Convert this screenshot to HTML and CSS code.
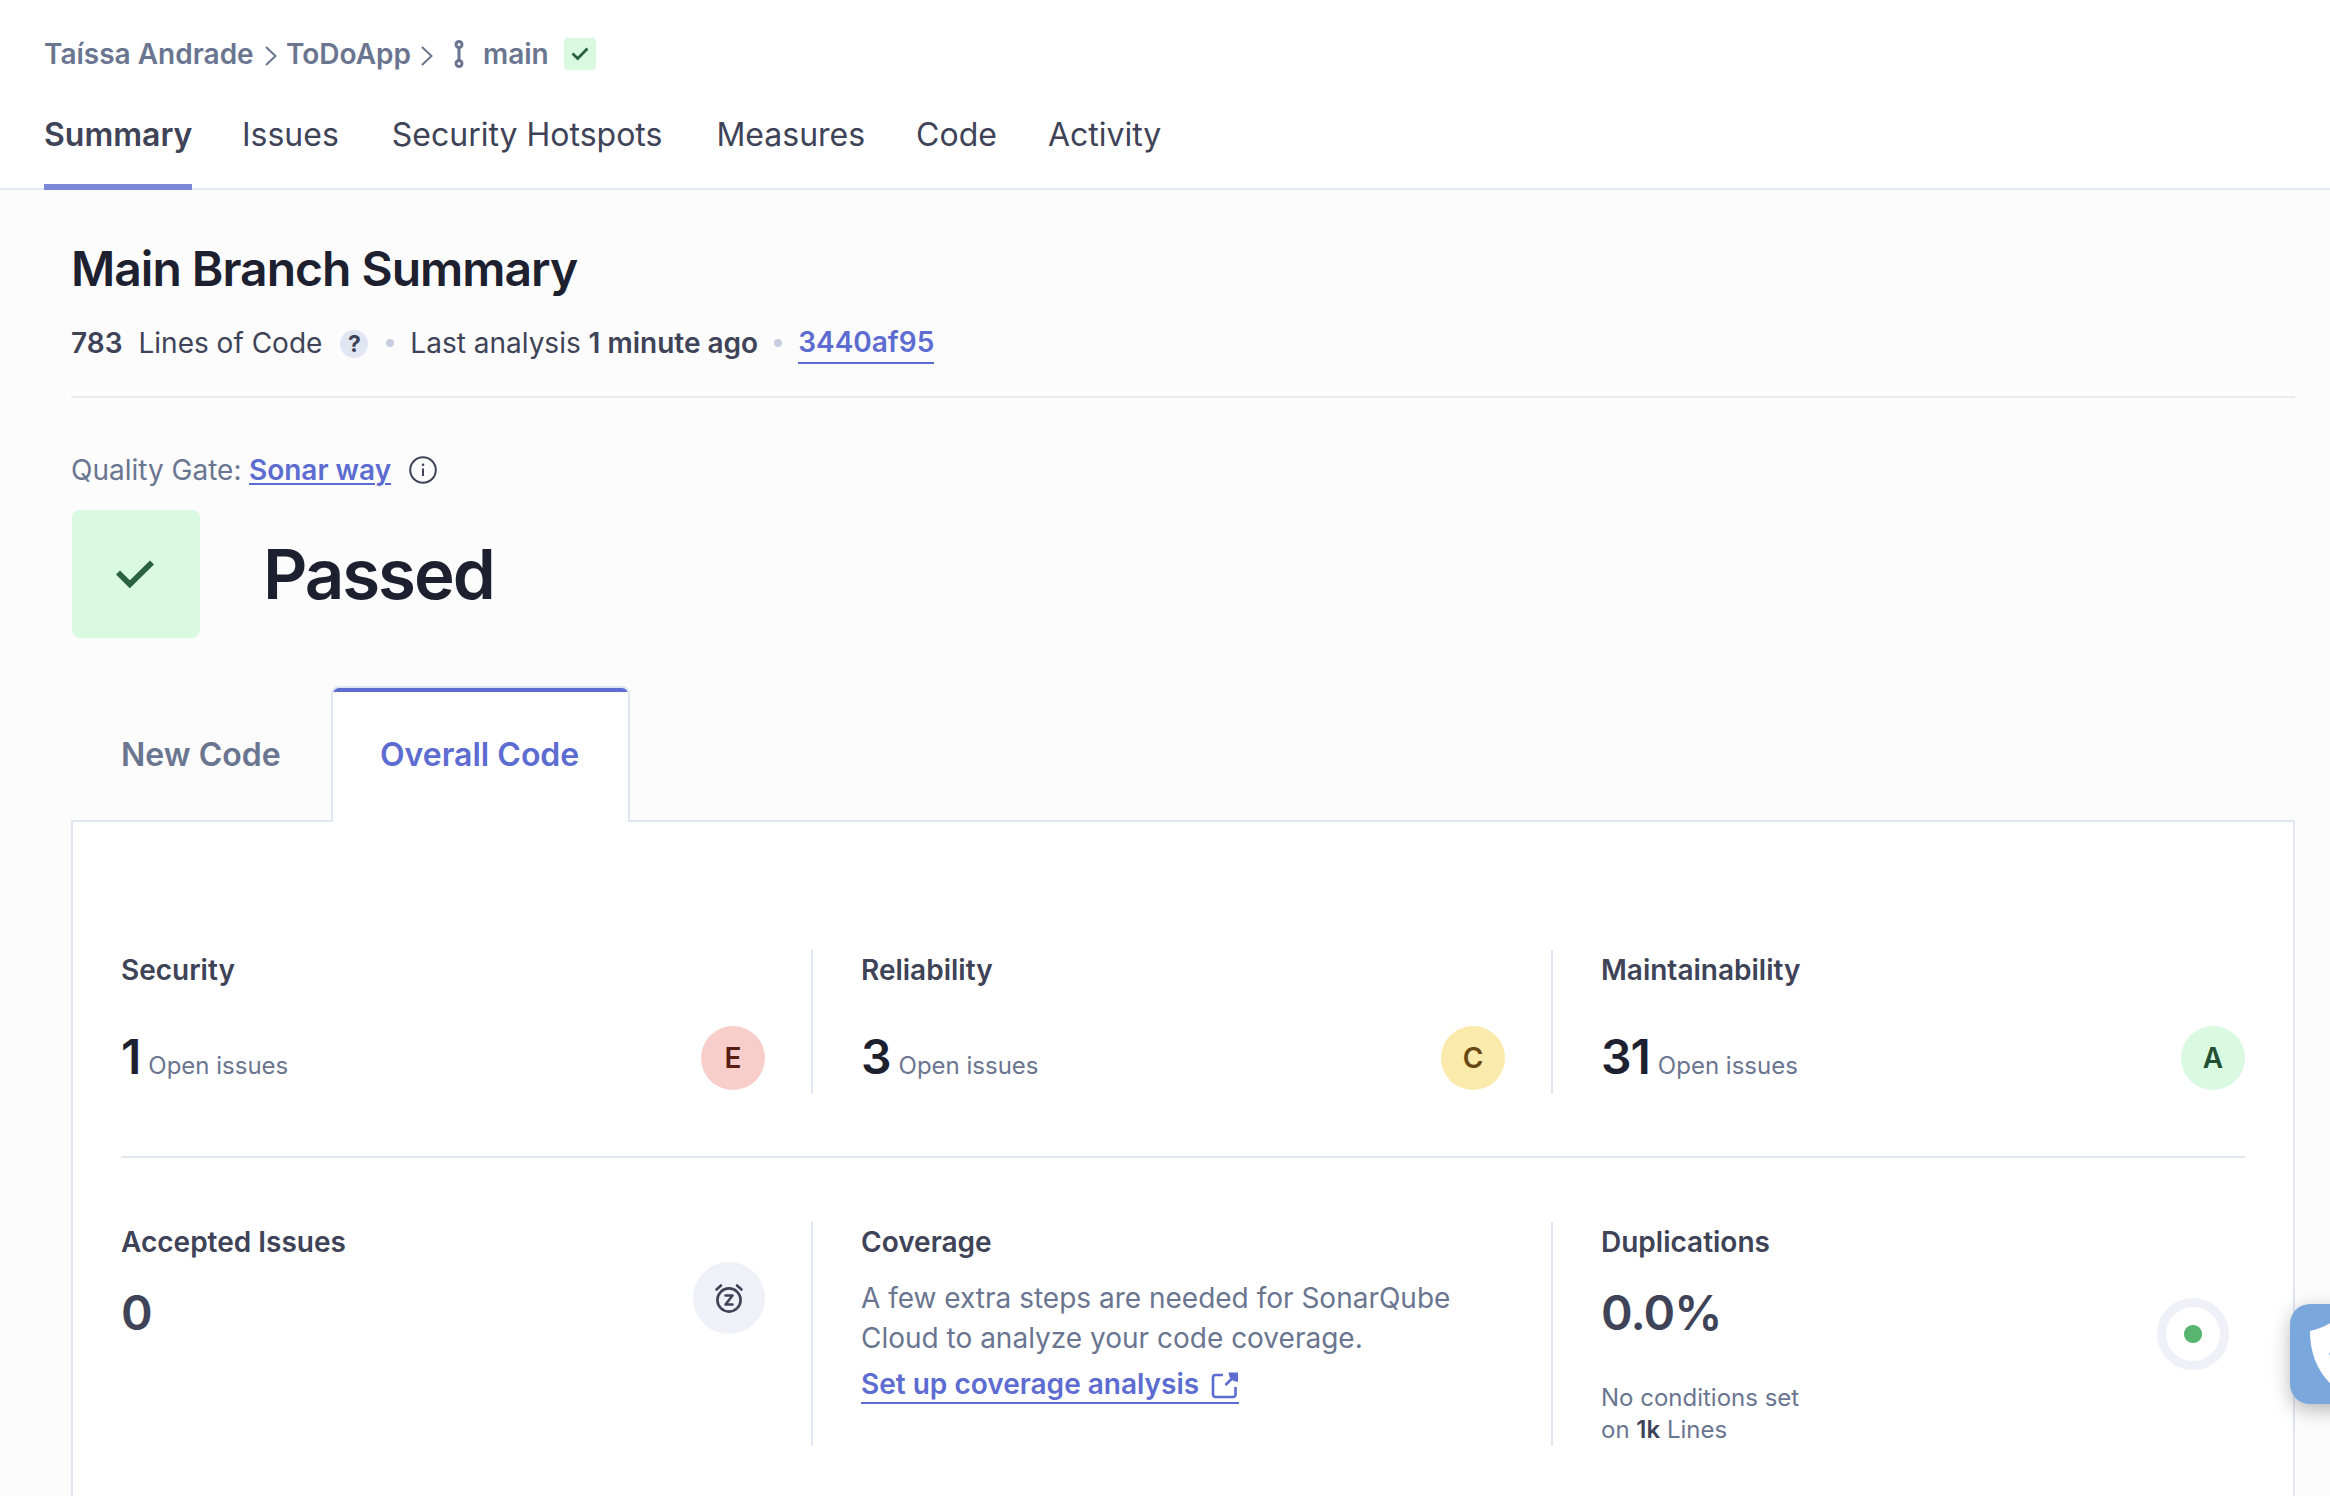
FILE: index.html
```html
<!DOCTYPE html>
<html lang="en">
<head>
<meta charset="utf-8">
<title>ToDoApp - Main Branch Summary</title>
<link rel="stylesheet" href="styles.css">
</head>
<body>
<header class="header">
  <nav class="crumbs">
    <a class="crumb-owner">Taíssa Andrade</a>
    <svg class="chevron" width="12" height="20" viewBox="0 0 12 20"><path d="M1 1l9.500 9-9.500 9"/></svg>
    <a class="crumb-project">ToDoApp</a>
    <svg class="chevron" width="12" height="20" viewBox="0 0 12 20"><path d="M1 1l9.500 9-9.500 9"/></svg>
    <svg class="branch" width="10" height="28" viewBox="0 0 10 28"><circle cx="5" cy="4.500" r="3"/><circle cx="5" cy="23.500" r="3"/><path d="M5 7.500v13"/></svg>
    <span class="crumb-branch">main</span>
    <span class="status-small"><svg width="18" height="14" viewBox="0 0 18 14"><path d="M1.500 6.500l5.200 5L16.500 1.500"/></svg></span>
  </nav>
  <nav class="nav">
    <a class="nav-item active">Summary</a>
    <a class="nav-item issues-link">Issues</a>
    <a class="nav-item hotspots-link">Security Hotspots</a>
    <a class="nav-item measures-link">Measures</a>
    <a class="nav-item">Code</a>
    <a class="nav-item">Activity</a>
  </nav>
</header>
<main class="content">
  <h1 class="title">Main Branch Summary</h1>
  <div class="meta">
    <b class="loc-count">783</b>
    <span class="loc-label">Lines of Code</span>
    <span class="help">?</span>
    <span class="dot"></span>
    <span class="analysis">Last analysis <b>1 minute ago</b></span>
    <span class="dot dot-last"></span>
    <a class="commit">3440af95</a>
  </div>
  <div class="gate">
    <span>Quality Gate:</span>
    <a class="gate-link">Sonar way</a>
    <svg class="info" width="28" height="28" viewBox="0 0 28 28"><circle cx="14" cy="14" r="12.800"/><path d="M14 12.500v7.500" /><circle class="info-dot" cx="14" cy="8.700" r="1.300"/></svg>
  </div>
  <div class="result">
    <div class="result-box"><svg width="40" height="30" viewBox="0 0 40 30"><path d="M2 13.500L13.800 25.300 36 3.500"/></svg></div>
    <div class="result-text">Passed</div>
  </div>
  <div class="tabs">
    <div class="tab">New Code</div>
    <div class="tab selected">Overall Code</div>
  </div>
  <section class="panel">
    <div class="row row-first">
      <div class="cell">
        <h2>Security</h2>
        <div class="issues"><b>1</b><span>Open issues</span><i class="rating e">E</i></div>
      </div>
      <div class="cell">
        <h2>Reliability</h2>
        <div class="issues"><b>3</b><span>Open issues</span><i class="rating c">C</i></div>
      </div>
      <div class="cell">
        <h2>Maintainability</h2>
        <div class="issues"><b>31</b><span>Open issues</span><i class="rating a">A</i></div>
      </div>
    </div>
    <div class="row row-second">
      <div class="cell accepted">
        <div><h2>Accepted Issues</h2><div class="value">0</div></div>
        <span class="snooze"><svg width="30" height="30" viewBox="0 0 30 30"><circle cx="15" cy="17" r="11.600"/><path d="M2.500 6.500L7 2.500M27.500 6.500L23 2.500M11.500 12.500h7l-7 9h7"/></svg></span>
      </div>
      <div class="cell">
        <h2>Coverage</h2>
        <p class="hint">A few extra steps are needed for SonarQube Cloud to analyze your code coverage.</p>
        <a class="setup">Set up coverage analysis<svg width="28" height="28" viewBox="0 0 28 28"><path class="frame" d="M12 4H4.500A2.500 2.500 0 0 0 2 6.500V23.500A2.500 2.500 0 0 0 4.500 26H22A2.500 2.500 0 0 0 24.500 23.500V16M14.500 14L23 5.500"/><path class="head" d="M17.500 1.500H27V11L22.500 10 18.500 6z"/></svg></a>
      </div>
      <div class="cell dup">
        <div><h2>Duplications</h2><div class="value">0.0%</div>
        <p class="cond">No conditions set<br>on <b>1k</b> Lines</p></div>
        <span class="ring"></span>
      </div>
    </div>
  </section>
</main>
<aside class="guard"><svg width="60" height="72" viewBox="0 0 60 72"><path d="M0 9Q18 5 30 -6Q42 5 60 9Q60 48 30 70Q0 48 0 9z"/><circle cx="21" cy="32" r="1.700"/></svg></aside>
</body>
</html>
```
FILE: styles.css
```css
* { box-sizing: border-box; margin: 0; padding: 0; }
html, body { height: 1496px; overflow: hidden; }
body { position: relative; background: #fcfcfd; color: #3e4357; font: 400 28px/40px Inter, "Liberation Sans", sans-serif; }
svg { display: block; flex: none; fill: none; }
b, h1, h2 { font-weight: 600; }
.header { height: 190px; padding: 34px 44px 0; background: #fff; border-bottom: 2px solid #e1e6f3; }
.crumbs { display: flex; align-items: center; height: 40px; color: #6a7590; font-weight: 600; white-space: nowrap; }
.crumb-owner { width: 221px; }
.crumb-project { width: 125px; margin: 0 10px 0 9px; }
.crumb-branch { width: 65px; margin-left: 19px; }
.chevron { stroke: #6a7590; stroke-width: 2; margin-top: 3px; }
.branch { stroke: #6a7590; stroke-width: 3; margin-left: 21px; }
.status-small { display: flex; align-items: center; justify-content: center; width: 32px; height: 32px; margin-left: 16px; border-radius: 4px; background: #d9f9e1; }
.status-small svg { stroke: #2a6140; stroke-width: 2.8; }
.nav { display: flex; margin-top: 38px; height: 78px; font-size: 32px; line-height: 46px; gap: 51px; white-space: nowrap; }
.nav-item { height: 78px; }
.nav-item.active { font-weight: 600; border-bottom: 6px solid #7b87d9; }
.issues-link { margin-left: -1.5px; }
.hotspots-link { margin-left: 2px; }
.measures-link { margin-left: 3px; }
.content { padding: 45px 35px 0 71px; }
.title { font-size: 48px; line-height: 68px; letter-spacing: -1px; color: #1d212f; }
.meta { display: flex; align-items: center; height: 95px; padding-bottom: 14px; border-bottom: 2px solid #ebebeb; white-space: nowrap; }
.loc-label { margin-left: 16px; }
.help { width: 28px; height: 28px; margin: 3px 0 0 18px; border-radius: 50%; background: #e1e6f3; font-size: 23px; font-weight: 700; line-height: 28px; text-align: center; }
.dot { width: 8px; height: 8px; margin: 0 16px 0 18px; border-radius: 50%; background: #c5cddf; }
.dot-last { margin-left: 16px; }
.commit { height: 42px; border-bottom: 2px solid #5d6cd0; color: #5d6cd0; font-weight: 600; }
.gate { display: flex; align-items: center; height: 40px; margin-top: 52px; color: #6a7590; }
.gate-link { margin-left: 7.5px; color: #5d6cd0; font-weight: 600; text-decoration: underline; text-decoration-thickness: 2px; text-underline-offset: 3px; }
.info { margin-left: 17.5px; stroke: #3e4357; stroke-width: 2; }
.info .info-dot { fill: #3e4357; stroke: none; }
.result { display: flex; align-items: center; margin: 20px 0 0 1px; height: 128px; }
.result-box { display: flex; align-items: center; justify-content: center; width: 128px; height: 128px; border-radius: 8px; background: #d9f9e1; }
.result-box svg { stroke: #2a6140; stroke-width: 5.6; }
.result-text { margin-left: 63px; color: #1d212f; font-size: 69px; line-height: 95px; font-weight: 600; letter-spacing: -2.1px; }
.tabs { display: flex; margin-top: 48px; height: 136px; position: relative; z-index: 1; }
.tab { width: 260px; padding: 0 50px; font-size: 32px; font-weight: 600; line-height: 138px; color: #6a7590; white-space: nowrap; }
.tab.selected { position: relative; width: 299px; padding: 0 47px; background: #fff; border: 2px solid #e1e6f3; border-bottom: 0; border-radius: 8px 8px 0 0; color: #5d6cd0; line-height: 134px; overflow: hidden; }
.tab.selected::before { content: ""; position: absolute; inset: 0 0 auto; height: 4px; background: #5d6cd0; }
.panel { margin-top: -2px; height: 700px; padding: 128px 48px 0; background: #fff; border: 2px solid #e1e6f3; }
.row { display: grid; grid-template-columns: 692px 740px 692px; }
.row-first { height: 208px; padding-bottom: 62px; border-bottom: 2px solid #e1e6f3; }
.row-second { height: 224px; margin-top: 64px; }
.cell { padding: 0 46px 0 48px; border-right: 2px solid #e1e6f3; }
.cell:first-child { padding-left: 0; }
.cell:last-child { padding-right: 0; border-right: 0; }
h2 { font-size: 28px; line-height: 40px; }
.issues { display: flex; align-items: baseline; height: 64px; margin-top: 36px; line-height: 62px; }
.issues b { font-size: 48px; color: #1d212f; letter-spacing: -1px; }
.issues span { margin-left: 8px; font-size: 24px; color: #6a7590; }
.rating { width: 64px; height: 64px; margin-left: auto; border-radius: 50%; font-style: normal; font-weight: 600; line-height: 64px; text-align: center; align-self: center; }
.e { background: #f7ceca; color: #571d12; }
.c { background: #faeaab; color: #694815; }
.a { background: #d9f9e1; color: #215032; }
.accepted, .dup { display: flex; justify-content: space-between; }
.value { margin-top: 21px; font-size: 48px; line-height: 60px; font-weight: 600; letter-spacing: -0.9px; }
.snooze { display: flex; align-items: center; justify-content: center; width: 72px; height: 72px; margin-top: 40px; border-radius: 50%; background: #f0f1f8; }
.snooze svg { stroke: #3e4357; stroke-width: 2.6; stroke-linecap: round; stroke-linejoin: round; }
.hint { margin-top: 16px; color: #6a7590; }
.setup { display: flex; align-items: center; width: max-content; height: 37px; margin-top: 9px; gap: 11.5px; border-bottom: 2px solid #5d6cd0; color: #5d6cd0; font-weight: 600; line-height: 37px; white-space: nowrap; }
.setup .frame { stroke: #5d6cd0; stroke-width: 2.6; }
.setup .head { fill: #5d6cd0; }
.cond { margin-top: 39px; font-size: 24px; line-height: 32px; color: #6a7590; }
.cond b { color: #3e4357; }
.ring { width: 72px; height: 72px; margin: 76px 16px 0 0; border: 9px solid #f0f1f8; border-radius: 50%; background: radial-gradient(circle, #57b570 8.500px, #fff 9.500px); }
.guard { position: absolute; z-index: 2; left: 2290px; top: 1304px; width: 100px; height: 100px; padding: 18px 0 0 20px; border-radius: 20px; background: #7aa8dd; box-shadow: 0 6px 20px rgba(0,0,0,.28); }
.guard svg { overflow: visible; }
.guard path { fill: #fff; }
.guard circle { fill: #7aa8dd; }
```
